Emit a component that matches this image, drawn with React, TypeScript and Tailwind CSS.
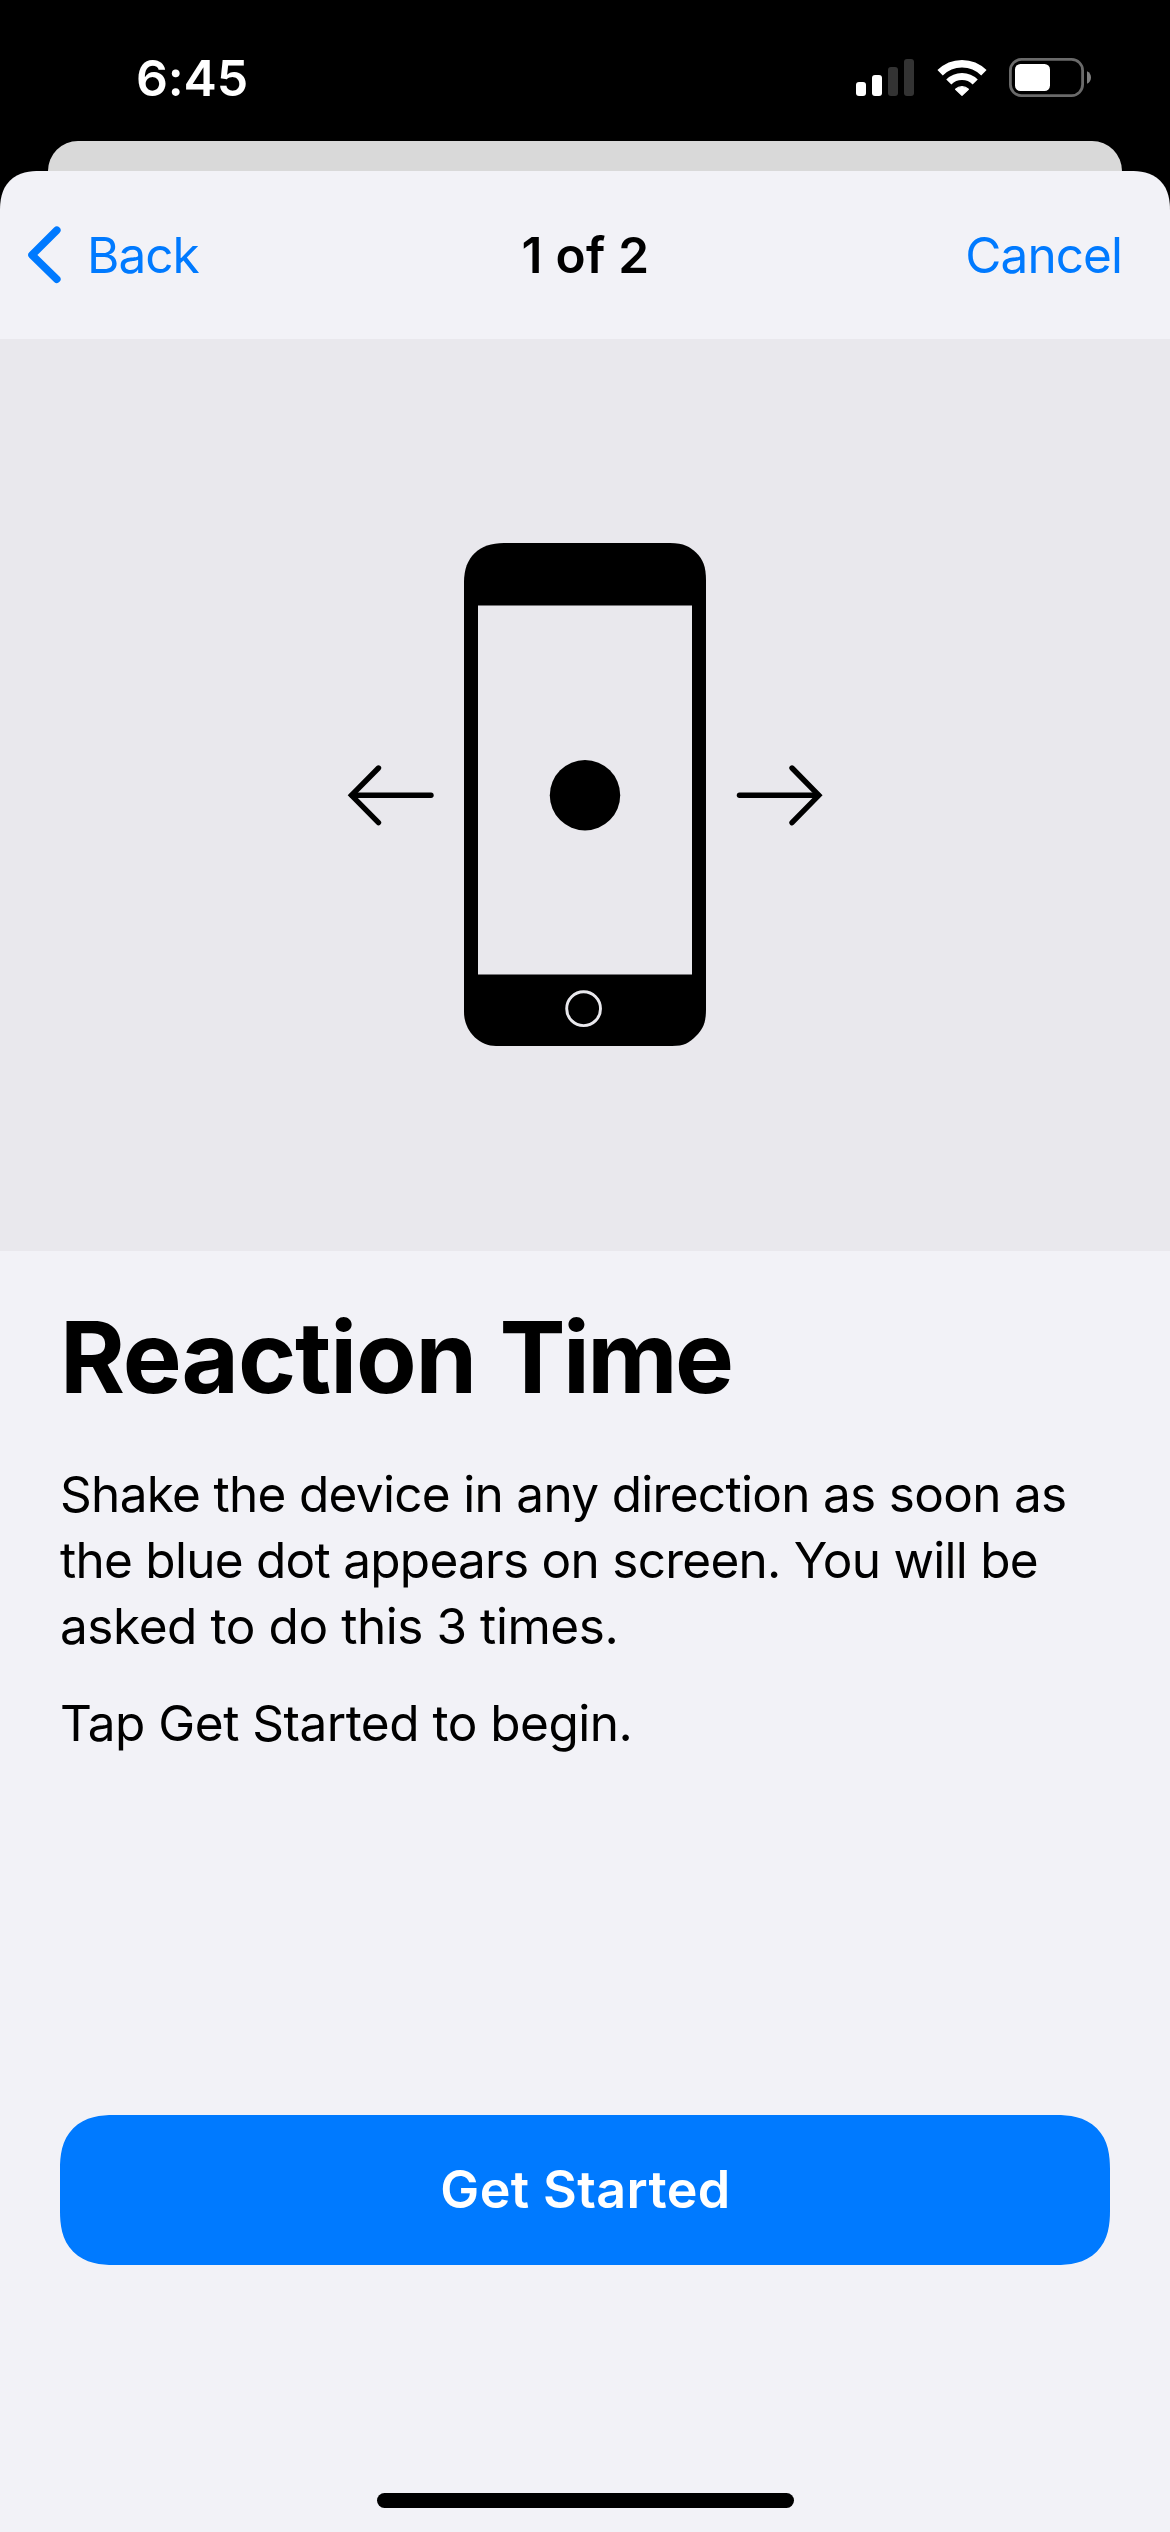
function SignalIcon() {
  return (
    <svg width="58" height="37" viewBox="0 0 58 37" fill="#fff">
      <rect x="0" y="23" width="10" height="14" rx="3" />
      <rect x="16" y="16" width="10" height="21" rx="3" />
      <rect x="32" y="8" width="10" height="29" rx="3" fill="#333" />
      <rect x="48" y="0" width="10" height="37" rx="3" fill="#333" />
    </svg>
  );
}

function WifiIcon() {
  return (
    <svg width="52" height="38" viewBox="0 0 52 38" fill="none" stroke="#fff">
      <path d="M4.1 13.8A31 31 0 0 1 47.9 13.8" strokeWidth="7.6" />
      <path d="M12.8 23A18.6 18.6 0 0 1 39.2 23" strokeWidth="7.2" />
      <path
        d="M19.6 30.2A9.4 9.4 0 0 1 32.4 30.2L26 36.4Z"
        fill="#fff"
        strokeWidth="1.2"
        strokeLinejoin="round"
      />
    </svg>
  );
}

function BatteryIcon() {
  return (
    <svg width="82" height="39" viewBox="0 0 82 39">
      <rect x="1.4" y="1.4" width="72.2" height="36.2" rx="11" fill="none" stroke="#6a6a6a" strokeWidth="2.8" />
      <rect x="6" y="6" width="35" height="27" rx="5.5" fill="#fff" />
      <path d="M78 13.3C80.6 14.4 82 16.8 82 19.5S80.6 24.6 78 25.7Z" fill="#7f7f7f" />
    </svg>
  );
}

function ChevronLeft() {
  return (
    <svg width="34" height="58" viewBox="0 0 34 58" fill="none">
      <path
        d="M29.8 4.3L5 29L29.8 53.2"
        stroke="#007aff"
        strokeWidth="7.6"
        strokeLinecap="round"
        strokeLinejoin="round"
      />
    </svg>
  );
}

function ShakePhone() {
  return (
    <svg width="476" height="504" viewBox="347 543 476 504" fill="none">
      <path
        d="M464 582C464 557 479 543 504 543H670C684 543 690 547 696 552.5C703 559.5 706 566 706 581V1009C706 1023 703 1029 696 1036C689 1043 684 1046 672 1046H496C479 1046 464 1031 464 1012Z"
        fill="#000"
      />
      <rect x="478" y="605.5" width="214" height="369" fill="#e9e8ed" />
      <circle cx="585" cy="795.2" r="35.2" fill="#000" />
      <circle cx="583.6" cy="1008.7" r="16.9" stroke="#e9e8ed" strokeWidth="2.9" />
      <g stroke="#000" strokeWidth="5.4" strokeLinecap="round" strokeLinejoin="miter">
        <path d="M431 795.3H352" />
        <path d="M378.5 768L351.5 795.3L378.5 822.7" />
        <path d="M739.5 795.3H818" />
        <path d="M792 768L818.8 795.3L792 822.7" />
      </g>
    </svg>
  );
}

export default function App() {
  return (
    <div className="flex h-[2532px] w-[1170px] flex-col overflow-hidden bg-black font-['Inter',sans-serif] text-black">
      <div className="flex h-[141px] shrink-0 items-start justify-between pr-[79px] pl-[136px] text-white">
        <span className="mt-[48px] text-[50px] leading-[60px] font-semibold tracking-[-0.2px]">6:45</span>
        <div className="mt-[58px] flex items-start">
          <div className="mt-px mr-[22px]">
            <SignalIcon />
          </div>
          <div className="mt-px mr-[21px]">
            <WifiIcon />
          </div>
          <BatteryIcon />
        </div>
      </div>

      <div className="mx-12 h-[30px] shrink-0 rounded-t-[30px] bg-[#d9d9d9]" />

      <main className="flex flex-1 flex-col rounded-t-[40px] bg-[#f2f2f7] [corner-shape:superellipse(1.3)]">
        <header className="grid h-[168px] shrink-0 grid-cols-3 items-center text-[49.5px] leading-[60px] whitespace-nowrap">
          <button className="flex items-center pl-[27px] text-[#007aff]">
            <ChevronLeft />
            <span className="ml-[26px] tracking-[-1px]">Back</span>
          </button>
          <h2 className="pl-px text-center font-semibold tracking-[0.3px]">1 of 2</h2>
          <button className="pr-[48px] text-right tracking-[-0.94px] text-[#007aff]">Cancel</button>
        </header>

        <section className="flex h-[912px] shrink-0 items-center justify-center bg-[#e9e8ed]">
          <ShakePhone />
        </section>

        <section className="pt-[46px] pl-[60px] text-[49.5px] leading-[66px] whitespace-nowrap">
          <h1 className="text-[99px] leading-[120px] font-bold tracking-[-1.1px]">
            Reaction <span className="ml-px tracking-[-2.6px]">Time</span>
          </h1>
          <p className="mt-[44px]">
            <span className="block tracking-[-0.69px]">Shake the device in any direction as soon as</span>
            <span className="block tracking-[-0.73px]">the blue dot appears on screen. You will be</span>
            <span className="block tracking-[-0.43px]">asked to do this 3 times.</span>
          </p>
          <p className="mt-[31px] tracking-[-0.5px]">Tap Get Started to begin.</p>
        </section>

        <div className="mt-auto flex flex-col items-center px-[60px] pb-6">
          <button className="h-[150px] w-full rounded-[54px] bg-[#007aff] pl-px text-[52px] font-semibold tracking-[0.39px] text-white [corner-shape:superellipse(1.3)]">
            Get Started
          </button>
          <div className="mt-[228px] h-[15px] w-[417px] rounded-full bg-black" />
        </div>
      </main>
    </div>
  );
}
